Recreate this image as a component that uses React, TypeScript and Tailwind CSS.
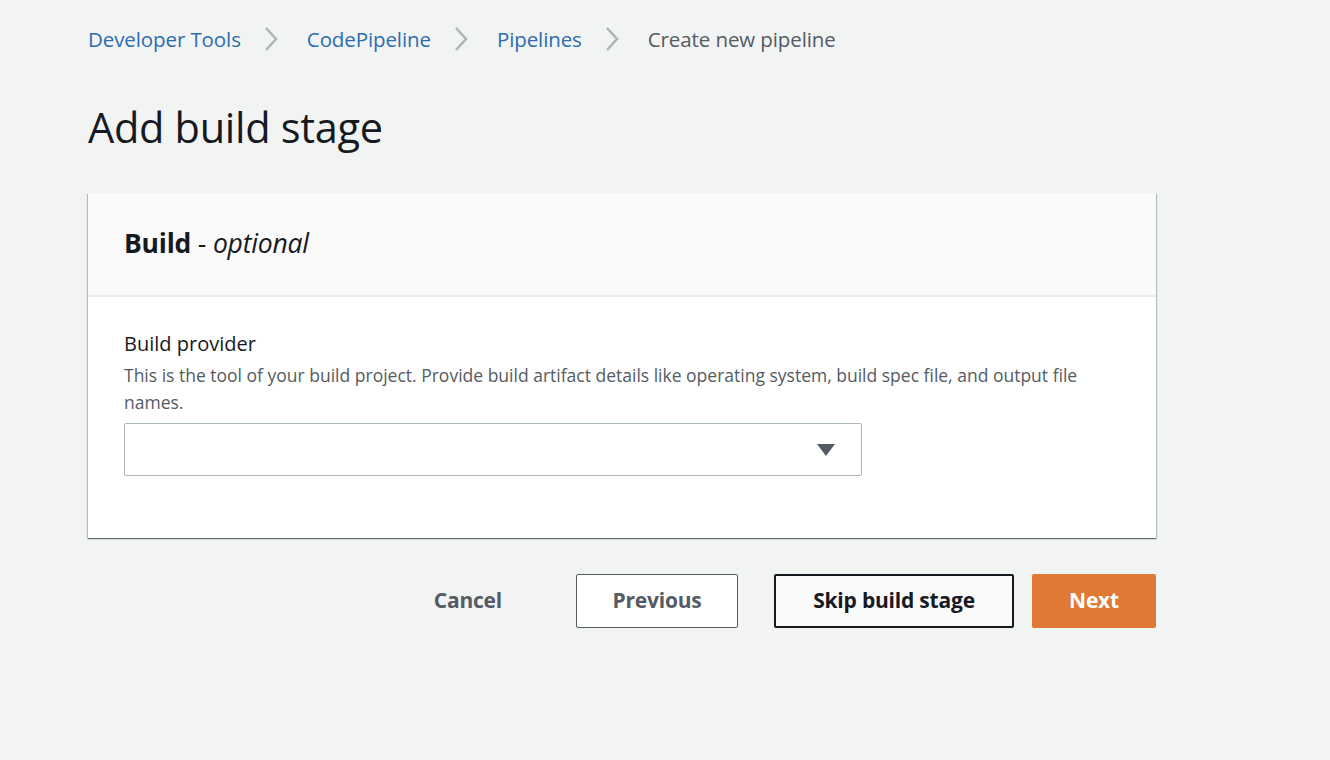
import React from "react";

const crumbs = ["Developer Tools", "CodePipeline", "Pipelines"];

const Chevron = () => (
  <svg width="16" height="28" viewBox="0 0 16 28" className="ml-[22px] mr-[28px]">
    <path d="M3 3 L13 14 L3 25" fill="none" stroke="#aab7b8" strokeWidth="2.5" />
  </svg>
);

const App = () => {
  return (
    <div
      className="min-h-[760px] w-full bg-[#f2f3f3] text-[#16191f]"
      style={{ fontFamily: "'Open Sans', Lato, sans-serif" }}
    >
      <div className="w-[1068px] ml-[88px] pt-[24px]">
        {/* breadcrumbs */}
        <nav className="flex items-center h-[30px] text-[20.5px] tracking-[-0.1px]">
          {crumbs.map((c) => (
            <React.Fragment key={c}>
              <a className="text-[#2d6cb0] cursor-pointer">{c}</a>
              <Chevron />
            </React.Fragment>
          ))}
          <span className="text-[#545b64]">Create new pipeline</span>
        </nav>

        <h1 className="mt-[47px] text-[41.5px] leading-[52px] font-normal tracking-[-0.3px]">Add build stage</h1>

        {/* card */}
        <div className="mt-[40px] bg-white shadow-[0_1px_1px_0_rgba(0,28,36,0.4),1px_1px_1px_0_rgba(0,28,36,0.2),-1px_1px_1px_0_rgba(0,28,36,0.2)]">
          <div className="bg-[#fafafa] h-[104px] flex items-center px-[36px] border-b-2 border-[#eaeded]">
            <h2 className="text-[26.5px] font-bold tracking-[-0.2px]">
              Build <span className="font-normal">-</span> <i className="font-normal">optional</i>
            </h2>
          </div>
          <div className="px-[36px] pt-[33px] pb-[62px]">
            <div className="text-[20px] leading-[28px]">Build provider</div>
            <p className="mt-[4px] text-[17.5px] leading-[27px] text-[#545b64] w-[990px]">
              This is the tool of your build project. Provide build artifact details like operating system, build spec
              file, and output file names.
            </p>
            <div className="mt-[7px] w-[738px] h-[53px] border border-[#aab7b8] rounded-[2px] flex items-center justify-end pr-[25px]">
              <svg width="20" height="14" viewBox="0 0 20 14">
                <path d="M1 1 H19 L10 13 Z" fill="#545b64" />
              </svg>
            </div>
          </div>
        </div>

        {/* actions */}
        <div className="mt-[36px] flex items-center justify-end text-[21px] font-bold tracking-[-0.2px]">
          <button className="px-[20px] h-[54px] text-[#545b64]">Cancel</button>
          <button className="ml-[54px] w-[162px] h-[54px] border border-[#545b64] rounded-[2px] bg-white text-[#545b64]">
            Previous
          </button>
          <button className="ml-[36px] w-[240px] h-[54px] border-2 border-[#16191f] rounded-[2px] bg-[#fafafa] text-[#16191f]">
            Skip build stage
          </button>
          <button className="ml-[18px] w-[124px] h-[54px] rounded-[2px] bg-[#e17833] text-white">Next</button>
        </div>
      </div>
    </div>
  );
};

export default App;
